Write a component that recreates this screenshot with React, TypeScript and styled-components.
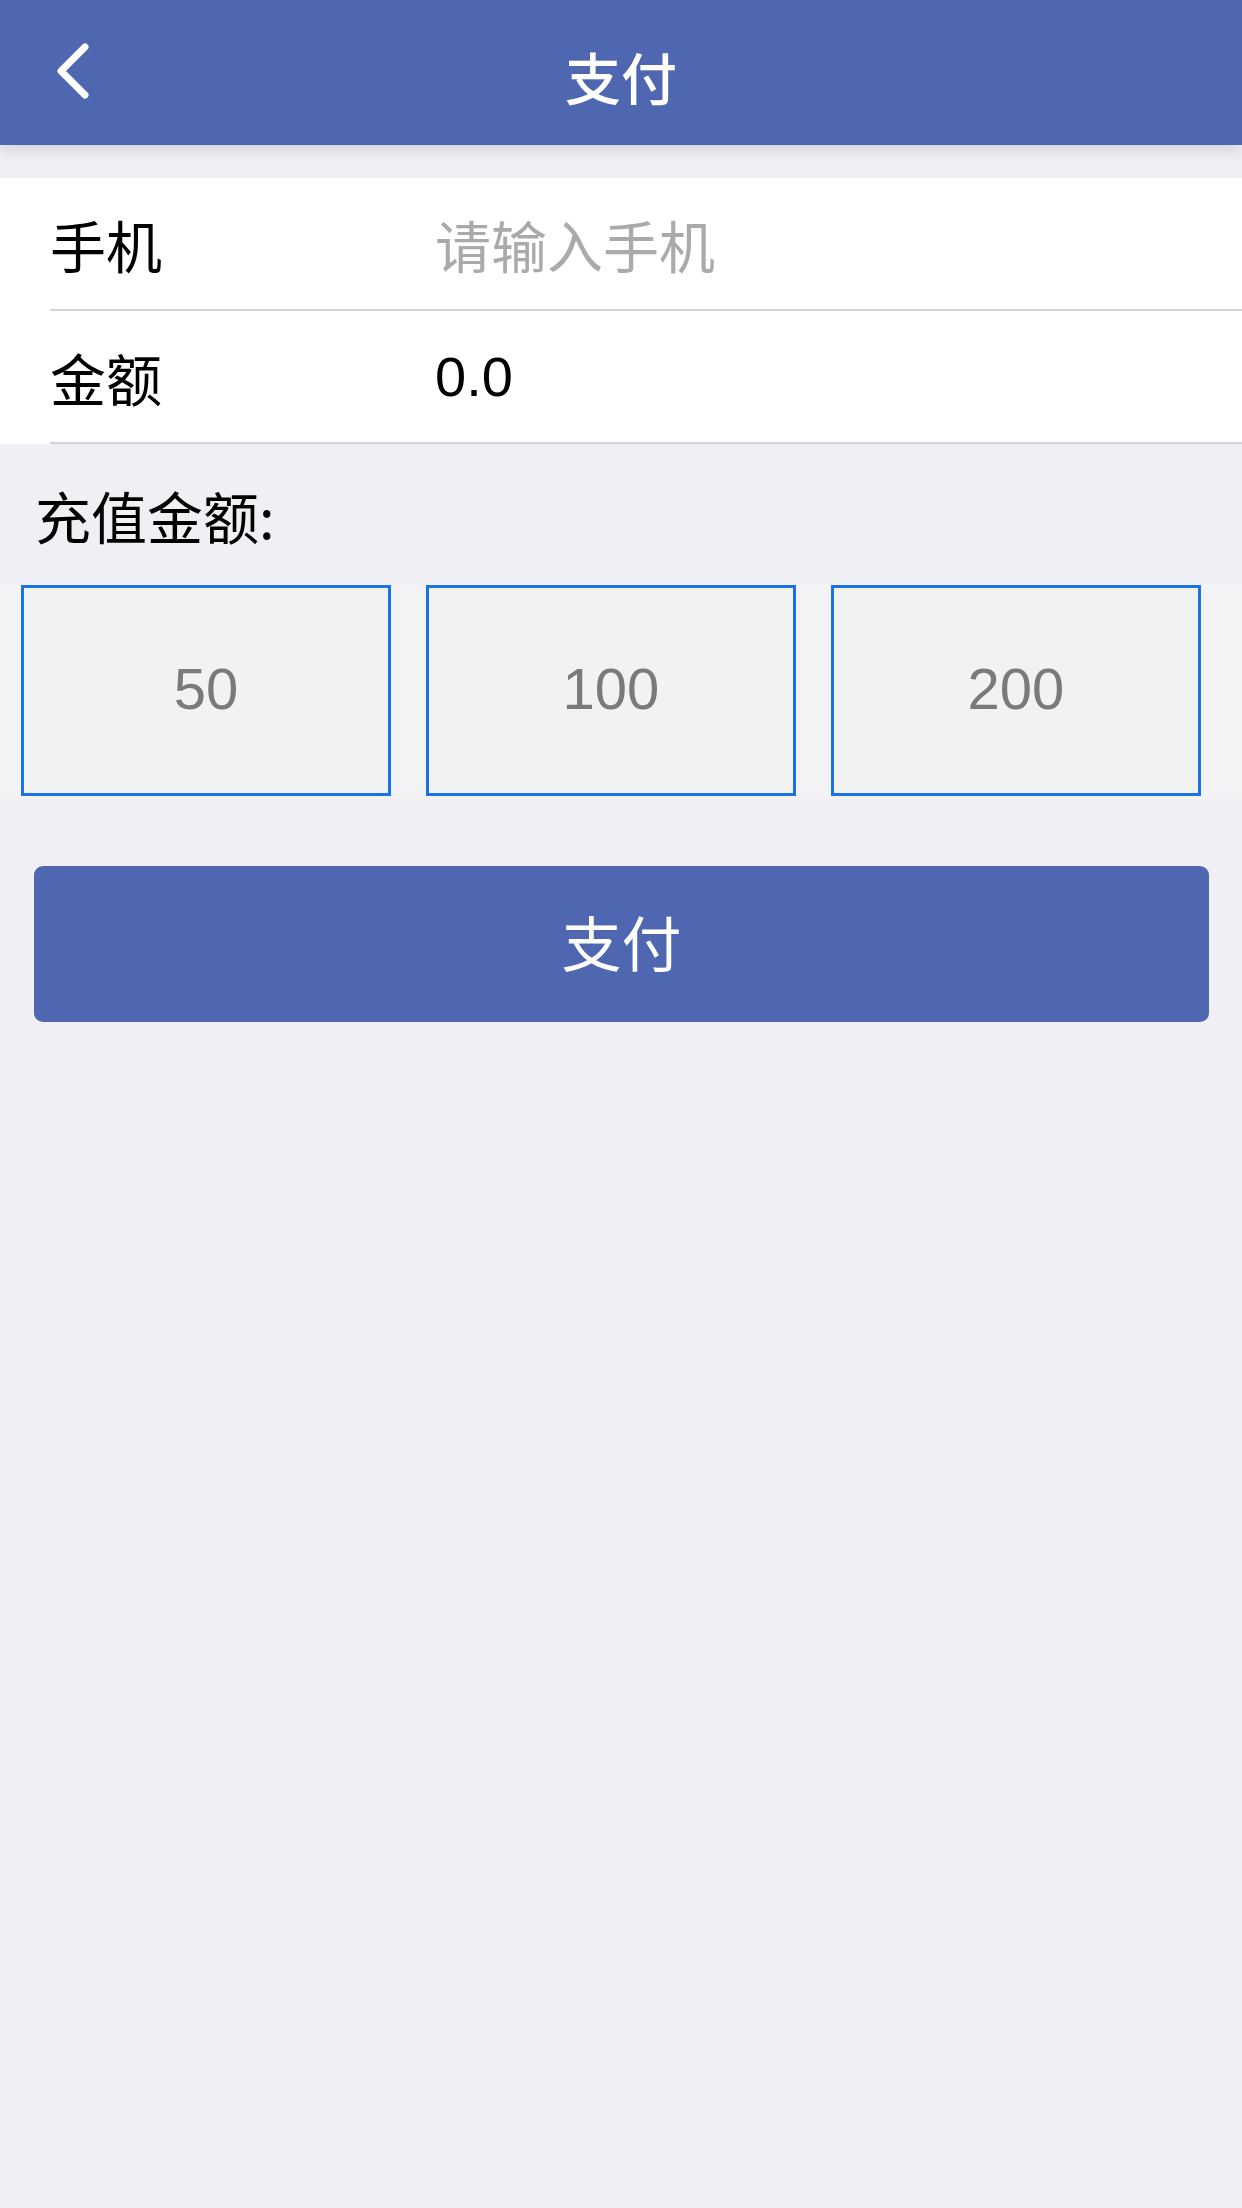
import React, { useState } from "react";
import styled, { createGlobalStyle } from "styled-components";

const GlobalStyle = createGlobalStyle`
  html, body {
    margin: 0;
    padding: 0;
    background: #efeff4;
  }
  body {
    font-family: "Liberation Sans", "Noto Sans CJK SC", sans-serif;
  }
`;

const Page = styled.div`
  min-height: 2208px;
  background: #efeff4;
`;

const Header = styled.header`
  position: relative;
  z-index: 2;
  height: 145px;
  background: #4f67b1;
  display: grid;
  grid-template-columns: 1fr auto 1fr;
  align-items: center;
  box-shadow: 0 4px 16px rgba(0, 0, 0, 0.13);
`;

const BackButton = styled.button`
  justify-self: start;
  margin-left: 52px;
  margin-top: -4px;
  width: 44px;
  height: 56px;
  padding: 0;
  border: none;
  background: transparent;
  display: flex;
  align-items: center;
  justify-content: center;
  cursor: pointer;
`;

const Title = styled.h1`
  margin: 6px 0 0;
  font-family: "Noto Sans CJK SC", sans-serif;
  font-weight: 500;
  font-size: 56px;
  line-height: 1;
  color: #ffffff;
`;

const Panel = styled.section`
  margin-top: 33px;
  background: #ffffff;
`;

const Row = styled.label`
  display: flex;
  align-items: center;
  height: 131px;
  margin-left: 50px;
  border-bottom: 2px solid #d4d4d8;
`;

const RowLabel = styled.span`
  width: 385px;
  flex-shrink: 0;
  font-family: "Noto Sans CJK SC", sans-serif;
  font-size: 56px;
  line-height: 1;
  color: #000000;
`;

const RowInput = styled.input<{ $cjk?: boolean }>`
  flex: 1;
  min-width: 0;
  border: none;
  outline: none;
  padding: 0;
  background: transparent;
  font-family: ${(p) =>
    p.$cjk ? `"Noto Sans CJK SC", sans-serif` : `"Liberation Sans", "Noto Sans CJK SC", sans-serif`};
  font-size: 56px;
  color: #000000;

  &::placeholder {
    color: #aaaaaa;
    font-family: "Noto Sans CJK SC", sans-serif;
  }
`;

const SectionTitle = styled.div`
  height: 140px;
  display: flex;
  align-items: center;
  padding-left: 35px;
  font-family: "Noto Sans CJK SC", sans-serif;
  font-size: 56px;
  color: #000000;
`;

const AmountStrip = styled.div`
  display: grid;
  grid-template-columns: repeat(3, 1fr);
  column-gap: 35px;
  padding: 1px 41px 3px 21px;
  background: #f3f3f5;
`;

const AmountBox = styled.button<{ $active: boolean }>`
  height: 211px;
  border: 3px solid #1a73e2;
  background: ${(p) => (p.$active ? "#e8eefb" : "#f2f2f2")};
  font-family: "Liberation Sans", sans-serif;
  font-size: 58px;
  color: #7a7a7a;
  cursor: pointer;
  padding: 0 0 5px;
`;

const PayButton = styled.button`
  display: block;
  width: calc(100% - 67px);
  height: 156px;
  margin: 67px 33px 0 34px;
  padding: 0 0 8px;
  border: none;
  border-radius: 9px;
  background: #4f67b1;
  color: #ffffff;
  font-family: "Noto Sans CJK SC", sans-serif;
  font-size: 60px;
  cursor: pointer;
`;

const amounts = [50, 100, 200];

export default function App() {
  const [phone, setPhone] = useState("");
  const [amount, setAmount] = useState<number | null>(null);

  return (
    <Page>
      <GlobalStyle />
      <Header>
        <BackButton aria-label="返回">
          <svg width="40" height="56" viewBox="0 0 40 56">
            <polyline
              points="31,4 7,28 31,52"
              fill="none"
              stroke="#ffffff"
              strokeWidth="7"
              strokeLinecap="round"
              strokeLinejoin="round"
            />
          </svg>
        </BackButton>
        <Title>支付</Title>
        <div />
      </Header>

      <Panel>
        <Row>
          <RowLabel>手机</RowLabel>
          <RowInput
            $cjk
            placeholder="请输入手机"
            value={phone}
            onChange={(e) => setPhone(e.target.value)}
          />
        </Row>
        <Row>
          <RowLabel>金额</RowLabel>
          <RowInput readOnly value={amount === null ? "0.0" : amount.toFixed(1)} />
        </Row>
      </Panel>

      <SectionTitle>充值金额:</SectionTitle>
      <AmountStrip>
        {amounts.map((a) => (
          <AmountBox key={a} $active={false} onClick={() => setAmount(a)}>
            {a}
          </AmountBox>
        ))}
      </AmountStrip>

      <PayButton>支付</PayButton>
    </Page>
  );
}
